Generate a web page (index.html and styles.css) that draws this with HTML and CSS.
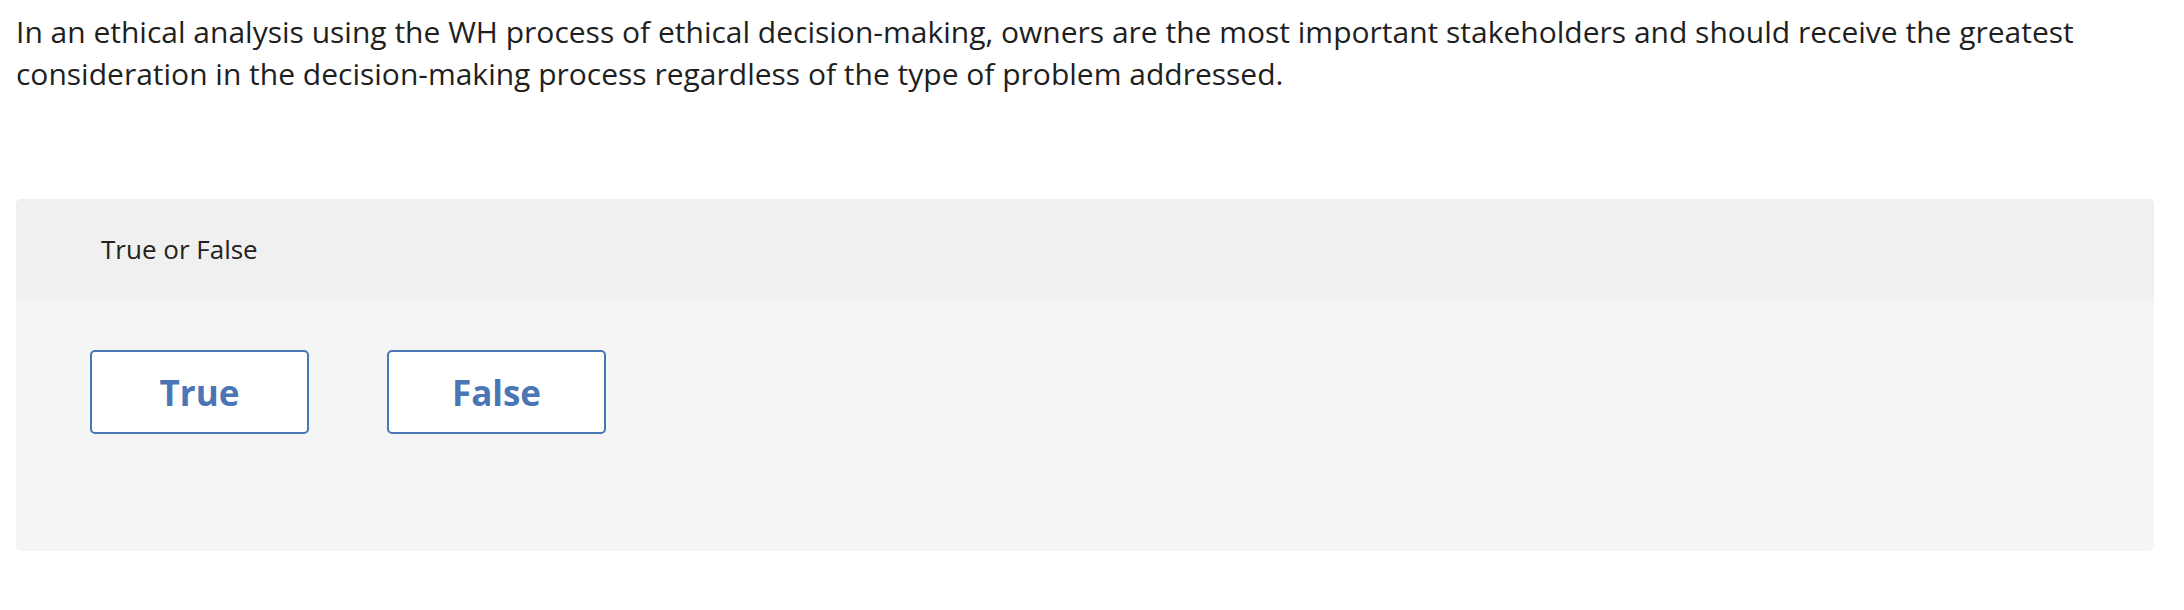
FILE: index.html
```html
<!DOCTYPE html>
<html lang="en">
<head>
<meta charset="utf-8">
<title>True or False</title>
<link rel="stylesheet" href="styles.css">
</head>
<body>
<main class="question">
  <p class="prompt">In an ethical analysis using the WH process of ethical decision-making, owners are the most important stakeholders and should receive the greatest consideration in the decision-making process regardless of the type of problem addressed.</p>
  <section class="answer-panel">
    <div class="panel-header">True or False</div>
    <div class="panel-body">
      <button class="choice" type="button">True</button>
      <button class="choice" type="button">False</button>
    </div>
  </section>
</main>
</body>
</html>
```

FILE: styles.css
```css
html, body {
  margin: 0;
  padding: 0;
  background: #ffffff;
}

.question {
  padding: 11px 30px 0 16px;
  font-family: "Open Sans", Lato, sans-serif;
  color: #1f1f1f;
}

.prompt {
  margin: 0;
  font-size: 30px;
  line-height: 42px;
}

.answer-panel {
  margin-top: 104px;
  border-radius: 5px;
  overflow: hidden;
  background: #f5f5f5;
}

.panel-header {
  height: 100px;
  display: flex;
  align-items: center;
  padding-left: 85px;
  background: #f0f0f0;
  font-size: 26px;
  color: #222222;
}

.panel-body {
  display: flex;
  gap: 78px;
  padding: 51px 0 117px 74px;
}

.choice {
  width: 219px;
  height: 84px;
  box-sizing: border-box;
  border: 2px solid #4a76b6;
  border-radius: 5px;
  background: #ffffff;
  color: #4a76b6;
  font-family: "Open Sans", Lato, sans-serif;
  font-weight: 700;
  font-size: 35px;
  cursor: pointer;
}
```
